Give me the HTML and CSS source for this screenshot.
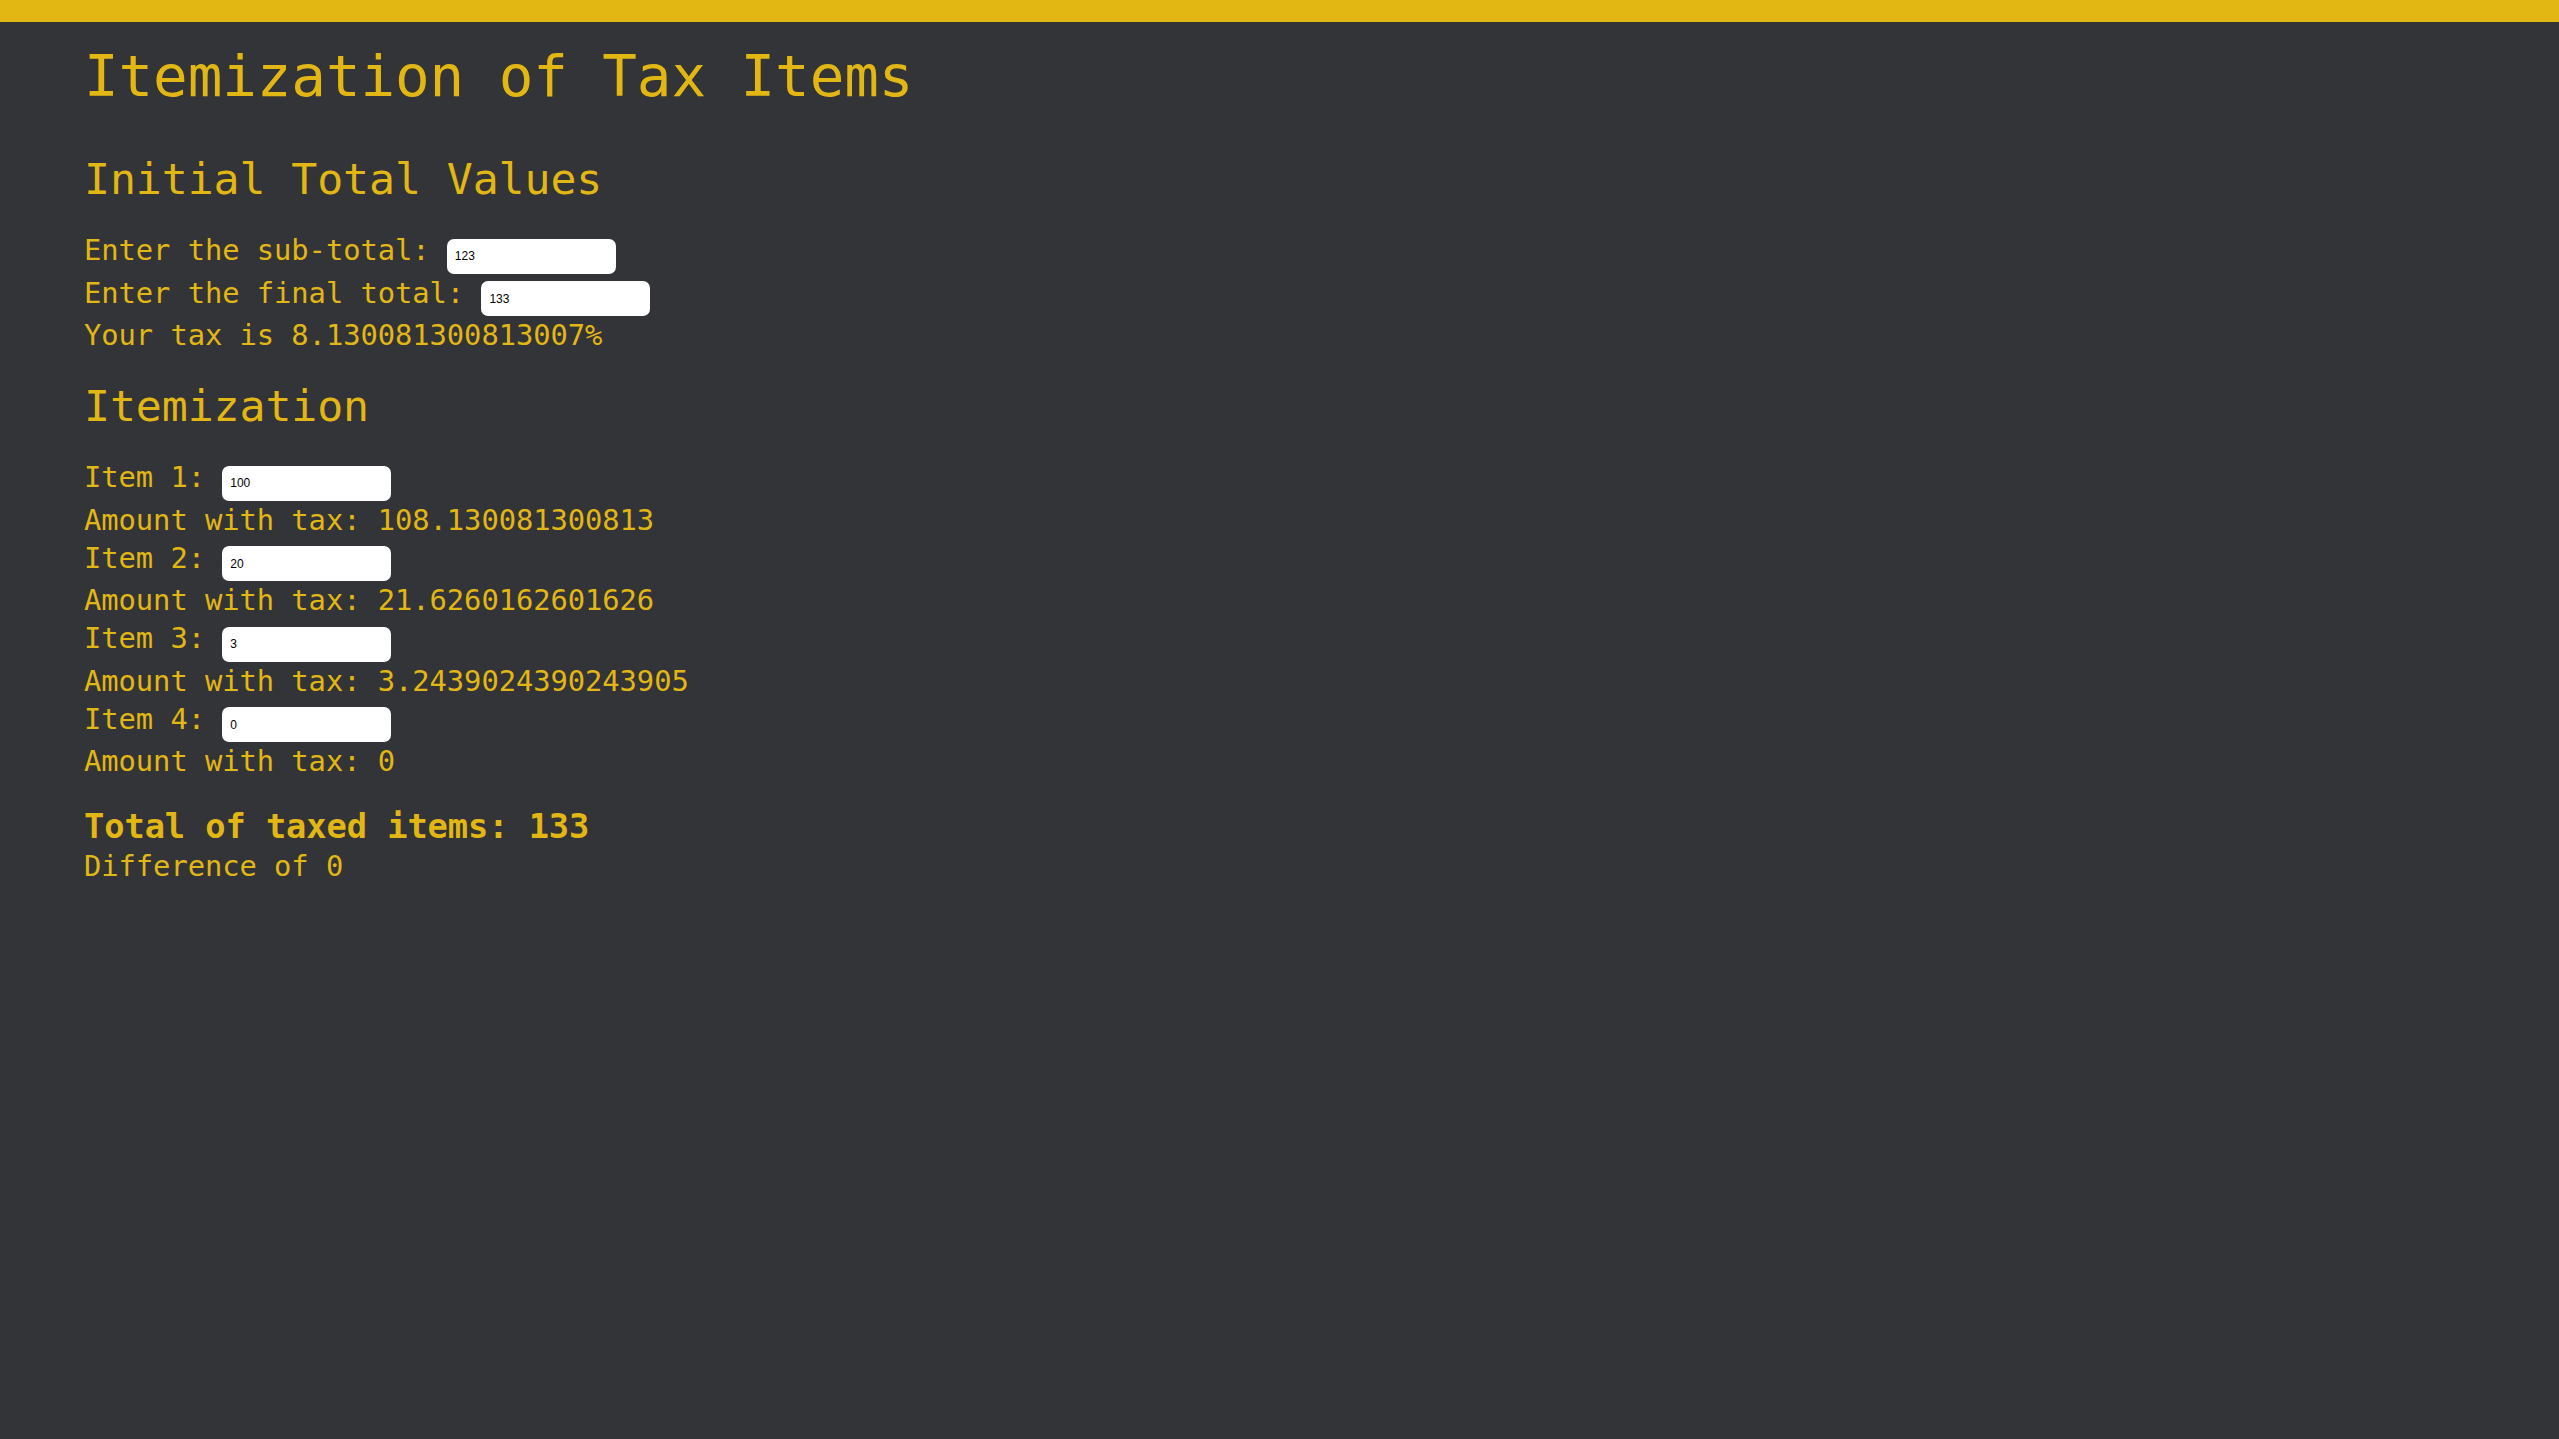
FILE: index.html
```html
<!DOCTYPE html>
<html lang="en">
<head>
<meta charset="utf-8">
<title>Itemization of Tax Items</title>
<link rel="stylesheet" href="styles.css">
</head>
<body>
<div class="topbar"></div>
<main class="page">
  <h1 class="title">Itemization of Tax Items</h1>

  <h2 class="section-title">Initial Total Values</h2>
  <div class="row"><label>Enter the sub-total:</label> <input class="field" type="text" value="123"></div>
  <div class="row"><label>Enter the final total:</label> <input class="field" type="text" value="133"></div>
  <div class="row">Your tax is 8.130081300813007%</div>

  <h2 class="section-title">Itemization</h2>
  <div class="row"><label>Item 1:</label> <input class="field" type="text" value="100"></div>
  <div class="row">Amount with tax: 108.130081300813</div>
  <div class="row"><label>Item 2:</label> <input class="field" type="text" value="20"></div>
  <div class="row">Amount with tax: 21.6260162601626</div>
  <div class="row"><label>Item 3:</label> <input class="field" type="text" value="3"></div>
  <div class="row">Amount with tax: 3.2439024390243905</div>
  <div class="row"><label>Item 4:</label> <input class="field" type="text" value="0"></div>
  <div class="row">Amount with tax: 0</div>

  <div class="total">Total of taxed items: 133</div>
  <div class="row">Difference of 0</div>
</main>
</body>
</html>
```
FILE: styles.css
```css
html, body {
  margin: 0;
  padding: 0;
}

body {
  background: #323437;
  color: #e2b714;
  font-family: "DejaVu Sans Mono", "Liberation Mono", monospace;
  font-size: 28.8px;
  letter-spacing: -0.06px;
  min-height: 100vh;
}

.topbar {
  height: 22px;
  background: #e2b714;
}

.page {
  padding: 0 0 0 84px;
}

.title {
  font-size: 57.6px;
  line-height: 68px;
  font-weight: normal;
  letter-spacing: -0.12px;
  margin: 21px 0 43px;
}

.section-title {
  font-size: 43.2px;
  line-height: 50px;
  font-weight: normal;
  letter-spacing: -0.09px;
  margin: 27px 0;
}

.row {
  line-height: 38px;
  white-space: pre;
}

.field {
  box-sizing: border-box;
  width: 169px;
  height: 35px;
  padding: 0 8px;
  border: none;
  border-radius: 7px;
  background: #ffffff;
  color: #000000;
  font-family: "Liberation Sans", Arial, sans-serif;
  font-size: 12px;
  letter-spacing: normal;
  vertical-align: baseline;
  outline: none;
}

.total {
  font-size: 33.7px;
  line-height: 40px;
  font-weight: bold;
  letter-spacing: -0.07px;
  margin-top: 27px;
}
```
